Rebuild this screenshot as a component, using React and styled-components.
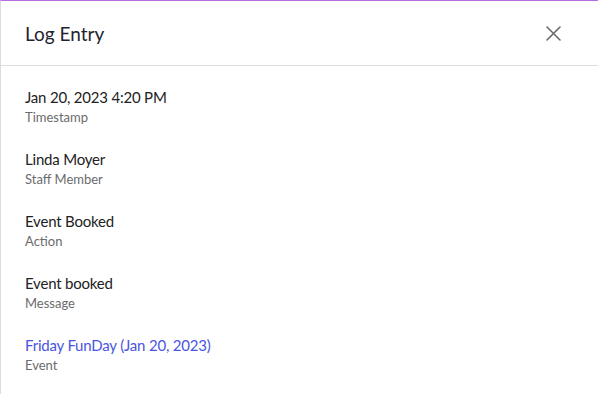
import styled, { createGlobalStyle } from "styled-components";

const GlobalStyle = createGlobalStyle`
  body {
    margin: 0;
    background: #fff;
    font-family: "Lato", "Liberation Sans", sans-serif;
  }
`;

const entries = [
  { value: "Jan 20, 2023 4:20 PM", label: "Timestamp" },
  { value: "Linda Moyer", label: "Staff Member" },
  { value: "Event Booked", label: "Action" },
  { value: "Event booked", label: "Message" },
  { value: "Friday FunDay (Jan 20, 2023)", label: "Event", link: true },
];

const App = () => {
  return (
    <>
      <GlobalStyle />
      <Modal>
        <Header>
          <Title>Log Entry</Title>
          <CloseButton aria-label="Close">
            <svg width="15" height="15" viewBox="0 0 15 15">
              <path d="M1 1L14 14M14 1L1 14" stroke="#6b6b6b" strokeWidth="1.6" strokeLinecap="round" />
            </svg>
          </CloseButton>
        </Header>
        <Body>
          {entries.map((e) => (
            <Field key={e.label}>
              <Value link={e.link}>{e.value}</Value>
              <Label>{e.label}</Label>
            </Field>
          ))}
        </Body>
      </Modal>
    </>
  );
};

export default App;

const Modal = styled.div`
  width: 598px;
  height: 394px;
  box-sizing: border-box;
  border-top: 1px solid #b56be3;
  border-left: 1px solid #dcdcdc;
  background: #fff;
  overflow: hidden;
`;

const Header = styled.div`
  height: 64px;
  display: flex;
  align-items: center;
  justify-content: space-between;
  padding: 0 37px 0 24px;
  border-bottom: 1px solid #dedede;
`;

const Title = styled.h1`
  margin: 0;
  font-size: 19px;
  font-weight: 400;
  color: #1f2330;
`;

const CloseButton = styled.button`
  border: none;
  background: none;
  padding: 0;
  cursor: pointer;
  display: flex;
`;

const Body = styled.div`
  padding: 21px 24px;
  display: flex;
  flex-direction: column;
  gap: 23px;
`;

const Field = styled.div`
  display: flex;
  flex-direction: column;
  gap: 2px;
`;

const Value = styled.div`
  font-size: 15px;
  letter-spacing: -0.2px;
  color: ${(p) => (p.link ? "#4a55e0" : "#222")};
  line-height: 20px;
`;

const Label = styled.div`
  font-size: 13px;
  color: #6b6b6b;
  line-height: 17px;
`;
